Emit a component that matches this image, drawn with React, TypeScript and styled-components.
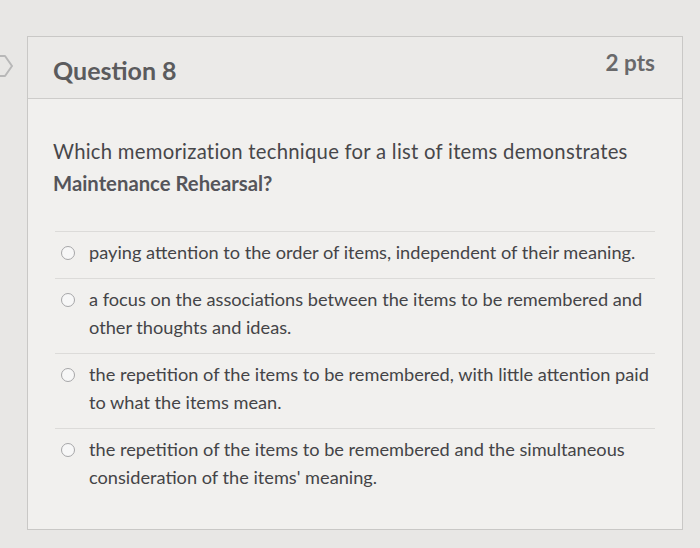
import React from 'react'
import styled, { createGlobalStyle } from 'styled-components'

const GlobalStyle = createGlobalStyle`
	html, body {
		margin: 0;
		padding: 0;
		background: #e8e7e5;
		font-family: Lato, 'Open Sans', sans-serif;
	}
`

const answers = [
	'paying attention to the order of items, independent of their meaning.',
	'a focus on the associations between the items to be remembered and other thoughts and ideas.',
	'the repetition of the items to be remembered, with little attention paid to what the items mean.',
	"the repetition of the items to be remembered and the simultaneous consideration of the items' meaning.",
]

const App = () => {
	return (
		<>
			<GlobalStyle />
			<Page>
				<NavArrow>
					<svg width="14" height="24" viewBox="0 0 14 24">
						<path d="M-4 2 L5 2 L12 12 L5 22 L-4 22" fill="none" stroke="#b8b8b8" strokeWidth="2" strokeLinejoin="round" />
					</svg>
				</NavArrow>
				<Card>
					<Header>
						<Title>Question 8</Title>
						<Points>2 pts</Points>
					</Header>
					<Body>
						<Prompt>
							Which memorization technique for a list of items demonstrates <strong>Maintenance Rehearsal?</strong>
						</Prompt>
						<AnswerList>
							{answers.map((text) => (
								<Answer key={text}>
									<Radio />
									<AnswerText>{text}</AnswerText>
								</Answer>
							))}
						</AnswerList>
					</Body>
				</Card>
			</Page>
		</>
	)
}

const Page = styled.div`
	position: relative;
	width: 700px;
	height: 548px;
	padding: 36px 0 0 27px;
	box-sizing: border-box;
	overflow: hidden;
`

const NavArrow = styled.div`
	position: absolute;
	left: 0;
	top: 54px;
`

const Card = styled.div`
	width: 656px;
	height: 494px;
	box-sizing: border-box;
	border: 1px solid #c9c8c6;
	background: #f1f0ee;
	display: flex;
	flex-direction: column;
`

const Header = styled.div`
	height: 62px;
	flex: none;
	box-sizing: border-box;
	background: #ebeae8;
	border-bottom: 1px solid #cdccca;
	display: flex;
	align-items: center;
	justify-content: space-between;
	padding: 0 27px 0 25px;
`

const Title = styled.h2`
	margin: 4px 0 0;
	font-size: 25px;
	font-weight: 700;
	color: #5b5b5d;
`

const Points = styled.span`
	margin-top: -10px;
	font-size: 22.5px;
	font-weight: 700;
	color: #69696b;
`

const Body = styled.div`
	padding: 36px 26px 0 25px;
`

const Prompt = styled.p`
	margin: 0;
	font-size: 20.3px;
	line-height: 32px;
	letter-spacing: 0.26px;
	color: #47474a;
	width: 600px;

	strong {
		font-weight: 700;
		letter-spacing: 0;
		color: #55555a;
	}
`

const AnswerList = styled.div`
	margin-top: 32px;
	margin-left: 2px;
	width: 600px;
`

const Answer = styled.div`
	display: flex;
	align-items: flex-start;
	border-top: 1px solid #dcdbd9;
	padding: 6px 0 12px 6px;
`

const Radio = styled.span`
	flex: none;
	width: 12px;
	height: 12px;
	border: 1.5px solid #a6a6a8;
	border-radius: 50%;
	background: #f7f7f7;
	margin: 8px 14px 0 0;
`

const AnswerText = styled.span`
	font-size: 18.2px;
	line-height: 28px;
	color: #444447;
	width: 565px;
`

export default App
